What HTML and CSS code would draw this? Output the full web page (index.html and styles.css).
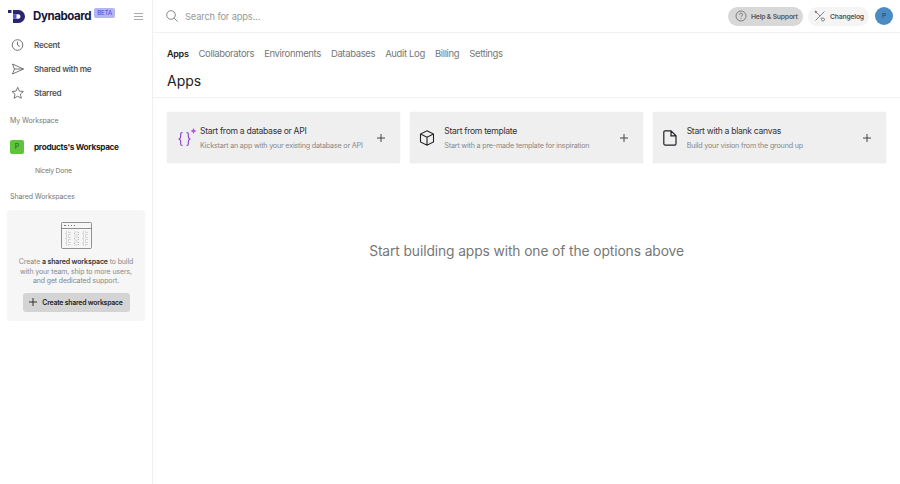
FILE: index.html
```html
<!DOCTYPE html>
<html lang="en">
<head>
<meta charset="utf-8">
<title>Dynaboard</title>
<link rel="stylesheet" href="styles.css">
</head>
<body>
<div class="app">
  <aside class="sidebar">
    <div class="brand">
      <svg class="logo" width="18" height="15" viewBox="0 0 18 15"><rect x="0" y="1" width="3.500" height="3" fill="#2a2570"/><path d="M5 1h5.500a6.500 6.500 0 0 1 0 13H5V9.800h5.200a2.300 2.300 0 0 0 0-4.600H5z" fill="#2a2570"/><rect x="5" y="5.200" width="3.500" height="4.600" fill="#5a54d0"/></svg>
      <span class="brand-name">Dynaboard</span>
      <span class="beta">BETA</span>
      <svg class="menu" width="9" height="7" viewBox="0 0 9 7"><path d="M0 .5h9M0 3.500h9M0 6.500h9" stroke="#aaa" stroke-width="1" fill="none"/></svg>
    </div>
    <nav class="nav">
      <div class="nav-item">
        <svg width="14" height="14" viewBox="0 0 14 14" fill="none" stroke="#666" stroke-width=".9"><circle cx="6.500" cy="7" r="5.300"/><path d="M6.500 3.700V7l2.300 1.500"/></svg>
        <span>Recent</span>
      </div>
      <div class="nav-item">
        <svg width="14" height="14" viewBox="0 0 14 14" fill="none" stroke="#666" stroke-width=".9"><path d="M1.500 2l11 5-11 5 2-5zM3.500 7h9"/></svg>
        <span>Shared with me</span>
      </div>
      <div class="nav-item">
        <svg width="14" height="14" viewBox="0 0 14 14" fill="none" stroke="#666" stroke-width=".9"><path d="M6.700 1.300l1.700 3.800 4 .4-3 2.700.9 4.100-3.600-2.100-3.600 2.100.9-4.100-3-2.700 4-.4z"/></svg>
        <span>Starred</span>
      </div>
    </nav>
    <div class="section-label my-label">My Workspace</div>
    <div class="workspace">
      <span class="ws-badge">P</span>
      <span class="ws-name">products's Workspace</span>
    </div>
    <div class="ws-sub">Nicely Done</div>
    <div class="section-label shared-label">Shared Workspaces</div>
    <div class="promo">
      <svg class="promo-art" width="31" height="27" viewBox="0 0 31 27" fill="none" stroke="#777" stroke-width=".8">
        <rect x=".5" y=".5" width="30" height="26" rx="1"/>
        <path d="M.5 6.500h30"/>
        <path d="M3 3.500h2M7 3.500h1M10 3.500h1M13 3.500h1" stroke-width="1"/>
        <path stroke-dasharray="1 1" stroke="#aaa" d="M5 10h4v3H5zM13.500 10h4v3h-4zM22 10h4v3h-4zM5 15h4v3H5zM13.500 15h4v3h-4zM22 15h4v3h-4zM5 20h4v3H5zM13.500 20h4v3h-4zM22 20h4v3h-4z"/>
      </svg>
      <p class="promo-text">Create <b>a shared workspace</b> to build<br>with your team, ship to more users,<br>and get dedicated support.</p>
      <button class="promo-btn">
        <svg width="8" height="8" viewBox="0 0 8 8"><path d="M4 0v8M0 4h8" stroke="#333" stroke-width="1"/></svg>
        <span>Create shared workspace</span>
      </button>
    </div>
  </aside>
  <div class="main">
    <header class="topbar">
      <svg class="search-icon" width="12" height="12" viewBox="0 0 12 12" fill="none" stroke="#888" stroke-width="1"><circle cx="5" cy="5" r="4.300"/><path d="M8.200 8.200L11.500 11.500"/></svg>
      <span class="search-text">Search for apps...</span>
      <div class="top-actions">
        <div class="pill pill-help">
          <svg width="12" height="12" viewBox="0 0 12 12" fill="none" stroke="#666" stroke-width=".8"><circle cx="6" cy="6" r="5"/><path d="M4.500 4.700a1.500 1.500 0 1 1 2.200 1.300c-.5.300-.7.600-.7 1.100M6 8.300v.8"/></svg>
          <span>Help &amp; Support</span>
        </div>
        <div class="pill pill-log">
          <svg width="12" height="12" viewBox="0 0 12 12" fill="none" stroke="#666" stroke-width=".8"><path d="M1.500 10.500l9-9M7.500 7.500l-1 1M1.500 1.500l3 3"/><path d="M1 1l1.500.5L2 3zM4.500 4.500L6 6"/><circle cx="9" cy="9.500" r="1.500"/></svg>
          <span>Changelog</span>
        </div>
        <span class="avatar">P</span>
      </div>
    </header>
    <nav class="tabs">
      <span class="tab active">Apps</span>
      <span class="tab">Collaborators</span>
      <span class="tab">Environments</span>
      <span class="tab">Databases</span>
      <span class="tab">Audit Log</span>
      <span class="tab">Billing</span>
      <span class="tab">Settings</span>
    </nav>
    <h1 class="title">Apps</h1>
    <section class="cards">
      <div class="card card-db">
        <svg class="card-icon" width="20" height="20" viewBox="0 0 20 20" fill="none" stroke="#8a3fd1" stroke-width="1.100"><path d="M5.500 4.500c-2.300 0-1.800 1.500-1.800 3.300 0 2-.5 3-2 3.200 1.500.3 2 1.200 2 3.100s-.5 3.400 1.800 3.400M9.500 4.500c2.300 0 1.800 1.500 1.800 3.300 0 2 .5 3 2 3.200-1.500.3-2 1.200-2 3.100s.5 3.400-1.800 3.400"/><path d="M16.500 0l.9 2.100 2.100.9-2.100.9-.9 2.100-.9-2.100-2.100-.9 2.100-.9z" fill="#b04fe0" stroke="none"/></svg>
        <div class="card-body">
          <div class="card-title">Start from a database or API</div>
          <div class="card-sub">Kickstart an app with your existing database or API</div>
        </div>
        <svg class="plus" width="8" height="8" viewBox="0 0 8 8"><path d="M4 0v8M0 4h8" stroke="#444" stroke-width="1"/></svg>
      </div>
      <div class="card card-tpl">
        <svg class="card-icon" width="16" height="16" viewBox="0 0 16 16" fill="none" stroke="#222" stroke-width="1.100"><path d="M8 .8l6.500 3.200v8L8 15.200 1.500 12V4zM1.500 4L8 7.200 14.500 4M8 7.200v8"/></svg>
        <div class="card-body">
          <div class="card-title">Start from template</div>
          <div class="card-sub">Start with a pre-made template for inspiration</div>
        </div>
        <svg class="plus" width="8" height="8" viewBox="0 0 8 8"><path d="M4 0v8M0 4h8" stroke="#444" stroke-width="1"/></svg>
      </div>
      <div class="card card-blank">
        <svg class="card-icon" width="14" height="16" viewBox="0 0 14 16" fill="none" stroke="#222" stroke-width="1.200"><path d="M2 .8h6l5 5v8a1.300 1.300 0 0 1-1.300 1.300H2A1.300 1.300 0 0 1 .8 13.800V2A1.300 1.300 0 0 1 2 .8zM8 .8v5h5"/></svg>
        <div class="card-body">
          <div class="card-title">Start with a blank canvas</div>
          <div class="card-sub">Build your vision from the ground up</div>
        </div>
        <svg class="plus" width="8" height="8" viewBox="0 0 8 8"><path d="M4 0v8M0 4h8" stroke="#444" stroke-width="1"/></svg>
      </div>
    </section>
    <div class="empty">Start building apps with one of the options above</div>
  </div>
</div>
</body>
</html>
```

FILE: styles.css
```css
* { box-sizing: border-box; }
html, body { margin: 0; height: 100%; }
body {
  font-family: Inter, "Liberation Sans", sans-serif;
  color: #222;
  background: #fff;
  overflow: hidden;
}
.app { display: flex; height: 484px; }

.sidebar {
  width: 153px;
  flex: none;
  border-right: 1px solid #efefef;
  display: flex;
  flex-direction: column;
  padding: 0 7px;
}
.brand { display: flex; align-items: center; height: 32px; padding-left: 1px; }
.logo { flex: none; }
.brand-name { margin-left: 7px; font-size: 11.500px; font-weight: 700; color: #16143a; letter-spacing: -.4px; }
.beta {
  align-self: flex-start;
  margin: 8px 0 0 3px;
  background: #b4b4ee;
  color: #4b49c8;
  font-size: 6px;
  line-height: 10px;
  width: 21px;
  text-align: center;
  border-radius: 2px;
}
.menu { margin-left: 19px; }

.nav { display: flex; flex-direction: column; padding-top: 1px; }
.nav-item {
  height: 24px;
  display: flex;
  align-items: center;
  gap: 9px;
  padding-left: 4px;
  font-size: 8.200px;
  font-weight: 600;
  color: #555;
  letter-spacing: -.28px;
}
.section-label { font-size: 7px; color: #777; padding-left: 3px; letter-spacing: -.1px; }
.my-label { margin-top: 10px; line-height: 12px; }
.workspace { display: flex; align-items: center; gap: 10px; margin-top: 12px; padding-left: 3px; height: 15px; }
.ws-badge {
  width: 14px; height: 14px;
  background: #5fc33b;
  color: #1e5c10;
  border-radius: 2px;
  font-size: 7px;
  display: flex; align-items: center; justify-content: center;
}
.ws-name { font-size: 8.200px; font-weight: 700; color: #222; letter-spacing: -.3px; }
.ws-sub { margin: 12px 0 0 28px; font-size: 6.800px; line-height: 10px; color: #777; letter-spacing: -.2px; }
.shared-label { margin-top: 15px; line-height: 12px; }

.promo {
  margin-top: 7px;
  height: 111px;
  width: 138px;
  background: #f6f6f6;
  border-radius: 4px;
  display: flex;
  flex-direction: column;
  align-items: center;
  padding-top: 12px;
}
.promo-art { flex: none; }
.promo-text {
  margin: 8px 0 0;
  text-align: center;
  font-size: 7px;
  line-height: 9.600px;
  color: #888;
  letter-spacing: -.13px;
  white-space: nowrap;
}
.promo-text b { color: #333; font-weight: 600; }
.promo-btn {
  margin-top: 7px;
  width: 107px;
  height: 19px;
  border: 0;
  border-radius: 3px;
  background: #d4d4d4;
  display: flex;
  align-items: center;
  justify-content: center;
  gap: 5px;
  font: 600 6.900px Inter, "Liberation Sans", sans-serif;
  color: #222;
  letter-spacing: -.22px;
  padding: 0;
}

.main { flex: 1; min-width: 0; display: flex; flex-direction: column; }
.topbar {
  height: 33px;
  flex: none;
  border-bottom: 1px solid #f2f2f2;
  display: flex;
  align-items: center;
  padding: 0 7px 0 13px;
}
.search-text { margin-left: 7px; font-size: 9.300px; color: #999; letter-spacing: -.15px; }
.top-actions { margin-left: auto; display: flex; align-items: center; }
.pill {
  height: 19px;
  border-radius: 10px;
  display: flex;
  align-items: center;
  font-size: 6.800px;
  font-weight: 600;
  color: #555;
  letter-spacing: -.2px;
  gap: 4px;
}
.pill-help { background: #d8d8d8; width: 75px; padding-left: 7px; }
.pill-log { background: #f4f4f4; width: 61px; padding-left: 6px; margin-left: 5px; }
.avatar {
  margin-left: 6px;
  width: 18px; height: 18px;
  border-radius: 50%;
  background: #4a8bc4;
  color: #1c3e66;
  font-size: 6.500px;
  display: flex; align-items: center; justify-content: center;
}

.tabs { display: flex; gap: 10px; padding: 14px 0 0 14px; line-height: 13px; }
.tab { font-size: 9.500px; color: #777; letter-spacing: -.36px; }
.tab.active { color: #222; font-weight: 600; font-size: 9px; letter-spacing: -.3px; }
.title {
  margin: 0;
  padding: 11px 0 6px 14px;
  font-size: 14px;
  font-weight: 400;
  line-height: 20px;
  border-bottom: 1px solid #f2f2f2;
  color: #222;
}
.cards { display: flex; gap: 10px; padding: 14px 14px 0 14px; }
.card {
  flex: 1 1 0;
  min-width: 0;
  height: 51px;
  background: #efefef;
  border-radius: 2px;
  box-shadow: 0 0 1px #ccc;
  display: flex;
  align-items: center;
  padding: 0 15px 0 10px;
}
.card-icon { flex: none; }
.card-db .card-icon { margin-right: 3px; }
.card-tpl { padding-left: 9px; }
.card-tpl .card-icon { margin-right: 9px; }
.card-blank .card-icon { margin-right: 10px; }
.card-body { flex: 1; min-width: 0; }
.card-title { font-size: 8.600px; line-height: 13px; color: #333; letter-spacing: -.3px; }
.card-sub { font-size: 7.200px; line-height: 11px; margin-top: 2px; color: #888; white-space: nowrap; letter-spacing: -.2px; }
.plus { flex: none; }
.empty {
  margin-top: 78px;
  text-align: center;
  font-size: 13.800px;
  line-height: 20px;
  color: #777;
  letter-spacing: -.1px;
}
```
